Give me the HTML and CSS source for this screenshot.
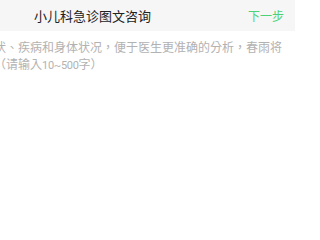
FILE: index.html
```html
<!DOCTYPE html>
<html lang="zh-CN">
<head>
<meta charset="utf-8">
<link rel="stylesheet" href="styles.css">
</head>
<body>
<div class="page">
  <header class="bar">
    <div class="title">小儿科急诊图文咨询</div>
    <div class="next">下一步</div>
  </header>
  <div class="input" lang="zh-TW">
    <div class="line line1">症状、疾病和身体状况，便于医生更准确的分析，春雨将</div>
    <div class="line line2">（请输入<span class="num">10~500</span>字）</div>
  </div>
</div>
</body>
</html>
```
FILE: styles.css
```css
html, body {
  margin: 0;
  padding: 0;
  background: #ffffff;
}
body {
  width: 300px;
  height: 200px;
  overflow: hidden;
  font-family: "Noto Sans CJK TC", "Noto Sans CJK SC", "Noto Sans", sans-serif;
}
.page {
  width: 300px;
  overflow: hidden;
}
.bar {
  width: 295px;
  height: 31px;
  background: #f6f6f6;
  display: flex;
  align-items: center;
  justify-content: space-between;
  box-sizing: border-box;
  padding: 0 11px 0 34px;
}
.title {
  font-size: 13px;
  color: #222222;
  line-height: 1;
}
.next {
  font-size: 12px;
  color: #4cd277;
  line-height: 1;
}
.input {
  padding-top: 7px;
  overflow: hidden;
}
.line {
  white-space: nowrap;
  font-size: 12px;
  line-height: 17px;
  color: #b2b2b2;
}
.line1 {
  margin-left: -18px;
}
.line2 {
  margin-left: -6px;
}
.num {
  font-family: "Roboto", "Noto Sans", sans-serif;
  font-size: 11px;
  letter-spacing: -0.3px;
}
```
